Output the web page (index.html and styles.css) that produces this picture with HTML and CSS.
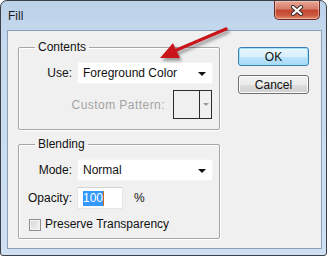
FILE: index.html
```html
<!DOCTYPE html>
<html lang="en">
<head>
    <meta charset="UTF-8">
    <title>Fill</title>
    <link rel="stylesheet" href="styles.css">
</head>
<body>
    <div class="window">
        <div class="titlebar">
            <span class="title">Fill</span>
            <button class="close" title="Close">
                <svg width="14" height="11" viewBox="0 0 14 11">
                    <path d="M3 2 L11 9 M11 2 L3 9" stroke="#3b3030" stroke-width="4.2" stroke-linecap="round"/>
                    <path d="M3 2 L11 9 M11 2 L3 9" stroke="#fff" stroke-width="2.2" stroke-linecap="round"/>
                </svg>
            </button>
        </div>
        <div class="client">
            <div class="groups">
                <fieldset class="group">
                    <legend>Contents</legend>
                    <div class="row first">
                        <label class="lbl">Use:</label>
                        <div class="select">Foreground Color<span class="caret"></span></div>
                    </div>
                    <div class="row pattern-row">
                        <label class="lbl-disabled">Custom Pattern:</label>
                        <div class="pattern">
                            <div class="swatch"></div>
                            <div class="pattern-btn"><span class="caret-gray"></span></div>
                        </div>
                    </div>
                </fieldset>
                <fieldset class="group blending">
                    <legend>Blending</legend>
                    <div class="row first">
                        <label class="lbl">Mode:</label>
                        <div class="select">Normal<span class="caret"></span></div>
                    </div>
                    <div class="row second">
                        <label class="lbl">Opacity:</label>
                        <div class="field"><span class="selected">100</span><span class="cursor"></span></div>
                        <span class="pct">%</span>
                    </div>
                    <div class="row check-row">
                        <span class="checkbox"></span>
                        <span>Preserve Transparency</span>
                    </div>
                </fieldset>
            </div>
            <div class="buttons">
                <button class="btn default">OK</button>
                <button class="btn">Cancel</button>
            </div>
        </div>
    </div>

    <!-- annotation arrow drawn over the dialog -->
    <svg class="arrow" width="328" height="257" viewBox="0 0 328 257">
        <line x1="226" y1="29" x2="172" y2="52" stroke="#c8161b" stroke-width="3.4" stroke-linecap="round"/>
        <polygon points="160,58 180,58 173,43" fill="#c8161b"/>
    </svg>
</body>
</html>
```

FILE: styles.css
```css
body {
    margin: 0;
    background: #fff;
    font-family: "Liberation Sans", Arial, sans-serif;
    font-size: 12px;
    color: #111;
    position: relative;
}
.window {
    width: 327px;
    height: 256px;
    box-sizing: border-box;
    border: 1px solid #3c3f44;
    border-radius: 7px 7px 3px 3px;
    background: linear-gradient(#bcd2ea, #c6d9ee 40px, #cfe0f2);
    padding: 0 4px 6px 6px;
    display: flex;
    flex-direction: column;
}
.titlebar {
    height: 29px;
    display: flex;
    align-items: flex-start;
    justify-content: space-between;
}
.title {
    padding: 8px 0 0 1px;
    line-height: 14px;
    color: #1b1b1b;
}
.close {
    width: 46px;
    height: 19px;
    margin-right: 2px;
    padding: 0;
    border: 1px solid #6b2a22;
    border-top: none;
    border-radius: 0 0 5px 5px;
    background: linear-gradient(#e7a898, #d67a68 45%, #c3452f 50%, #cc5a40 80%, #e08f70);
    box-shadow: inset 0 0 0 1px rgba(255, 220, 210, 0.5);
    display: flex;
    align-items: center;
    justify-content: center;
}
.client {
    flex: 1;
    background: #f0f0f0;
    border: 1px solid #8c9fb8;
    display: flex;
    padding-left: 10px;
}
.groups {
    width: 202px;
    display: flex;
    flex-direction: column;
}
.group {
    margin: 9px 0 0 0;
    padding: 0 0 10px 0;
    border: 1px solid #a6a6a6;
    border-radius: 2px;
    box-shadow: inset 1px 1px 0 #fff, 1px 1px 0 #fff;
    min-width: 0;
}
.blending {
    margin-top: 7px;
    padding-bottom: 7px;
}
.group legend {
    margin-left: 16px;
    padding: 0 3px;
    line-height: 14px;
}
.row {
    display: flex;
    align-items: center;
}
.row.first {
    margin-top: 8px;
}
.row.second {
    margin-top: 6px;
}
.lbl {
    width: 53px;
    margin-right: 5px;
    text-align: right;
}
.select {
    width: 136px;
    height: 22px;
    box-sizing: border-box;
    background: #fff;
    border: 1px solid #f4f4f4;
    padding-left: 5px;
    display: flex;
    align-items: center;
    position: relative;
}
.caret {
    position: absolute;
    right: 6px;
    top: 9px;
    border-left: 4px solid transparent;
    border-right: 4px solid transparent;
    border-top: 4px solid #111;
}
.pattern-row {
    margin-top: 6px;
    justify-content: flex-end;
    padding-right: 7px;
}
.lbl-disabled {
    color: #a3a3a3;
    margin-right: 8px;
    letter-spacing: 0.45px;
}
.pattern {
    width: 39px;
    height: 29px;
    box-sizing: border-box;
    border: 1px solid #2c2c2c;
    display: flex;
}
.swatch {
    width: 25px;
    border-right: 1px solid #2c2c2c;
}
.pattern-btn {
    flex: 1;
    display: flex;
    align-items: center;
    justify-content: center;
}
.caret-gray {
    border-left: 3px solid transparent;
    border-right: 3px solid transparent;
    border-top: 3px solid #9a9a9a;
}
.field {
    width: 46px;
    height: 22px;
    box-sizing: border-box;
    background: #fff;
    border: 1px solid #e6e6e6;
    border-top-color: #d4d4d4;
    padding-left: 5px;
    display: flex;
    align-items: center;
}
.selected {
    background: #3399ff;
    color: #fff;
    line-height: 15px;
}
.cursor {
    width: 1px;
    height: 15px;
    background: #c86a1a;
}
.pct {
    margin-left: 11px;
}
.check-row {
    margin-top: 9px;
    padding-left: 10px;
    line-height: 13px;
}
.checkbox {
    width: 12px;
    height: 12px;
    box-sizing: border-box;
    border: 1px solid #8f8f8f;
    background: linear-gradient(135deg, #d6d6d6, #f4f4f4);
    box-shadow: inset 0 0 0 1px #f2f2f2;
    margin-right: 4px;
}
.buttons {
    margin-left: 18px;
    padding-top: 16px;
    display: flex;
    flex-direction: column;
    gap: 9px;
}
.btn {
    width: 71px;
    height: 19px;
    padding: 0;
    font-family: "Liberation Sans", Arial, sans-serif;
    font-size: 12px;
    color: #111;
    border: 1px solid #707070;
    border-radius: 3px;
    background: linear-gradient(#f2f2f2, #ebebeb 50%, #dddddd 51%, #cfcfcf);
    box-shadow: inset 0 0 0 1px #fcfcfc;
}
.btn.default {
    border-color: #3c7fb1;
    background: linear-gradient(#eaf6fd, #d9f0fc 50%, #bee6fd 51%, #a7d9f5);
    box-shadow: inset 0 0 0 1px #9fe0fb;
}
.arrow {
    position: absolute;
    left: 0;
    top: 0;
    pointer-events: none;
    filter: drop-shadow(2px 3px 1.5px rgba(0, 0, 0, 0.35));
}
```
